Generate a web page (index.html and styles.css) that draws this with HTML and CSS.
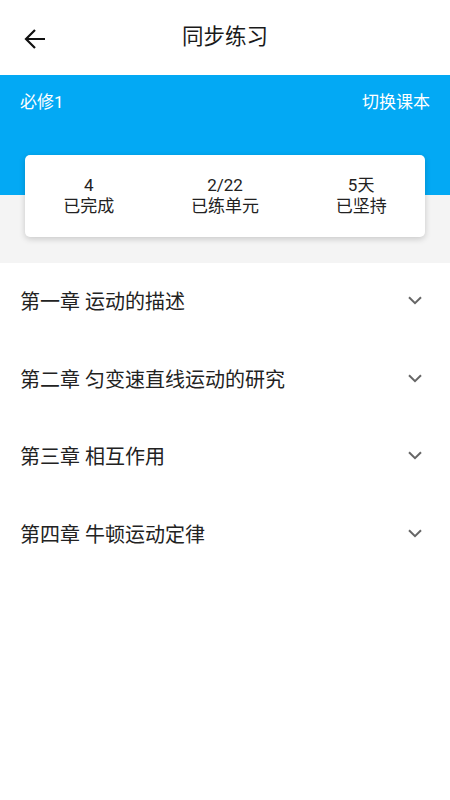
FILE: index.html
```html
<!DOCTYPE html>
<html lang="zh-CN">
<head>
<meta charset="utf-8">
<title>同步练习</title>
<link rel="stylesheet" href="styles.css">
</head>
<body>
<header class="topbar">
  <svg class="back" width="22" height="22" viewBox="0 0 22 22" aria-hidden="true">
    <path d="M21 11H2.5M11 2L2 11l9 9" fill="none" stroke="#111" stroke-width="2.2" stroke-linecap="butt" stroke-linejoin="miter"/>
  </svg>
  <h1 class="title">同步练习</h1>
</header>
<section class="summary">
  <div class="book-row">
    <span>必修1</span>
    <span>切换课本</span>
  </div>
  <div class="card">
    <div class="stat"><div class="num">4</div><div class="label">已完成</div></div>
    <div class="stat"><div class="num">2/22</div><div class="label">已练单元</div></div>
    <div class="stat"><div class="num">5天</div><div class="label">已坚持</div></div>
  </div>
</section>
<ul class="chapters">
  <li class="chapter"><span>第一章 运动的描述</span><svg class="chev" width="14" height="9" viewBox="0 0 14 9"><path d="M1 1.2l6 6 6-6" fill="none" stroke="#666" stroke-width="2"/></svg></li>
  <li class="chapter"><span>第二章 匀变速直线运动的研究</span><svg class="chev" width="14" height="9" viewBox="0 0 14 9"><path d="M1 1.2l6 6 6-6" fill="none" stroke="#666" stroke-width="2"/></svg></li>
  <li class="chapter"><span>第三章 相互作用</span><svg class="chev" width="14" height="9" viewBox="0 0 14 9"><path d="M1 1.2l6 6 6-6" fill="none" stroke="#666" stroke-width="2"/></svg></li>
  <li class="chapter"><span>第四章 牛顿运动定律</span><svg class="chev" width="14" height="9" viewBox="0 0 14 9"><path d="M1 1.2l6 6 6-6" fill="none" stroke="#666" stroke-width="2"/></svg></li>
</ul>
</body>
</html>
```
FILE: styles.css
```css
* { box-sizing: border-box; }
html, body {
  margin: 0;
  padding: 0;
  background: #fff;
  font-family: Roboto, "Noto Sans CJK SC", sans-serif;
  font-weight: 400;
  color: #222;
}
.topbar {
  position: relative;
  height: 75px;
  display: flex;
  align-items: center;
  justify-content: center;
}
.back {
  position: absolute;
  left: 24px;
  top: 28px;
}
.title {
  margin: 0;
  font-size: 21.5px;
  font-weight: 400;
  color: #1a1a1a;
  line-height: 30px;
  padding-bottom: 1px;
}
.summary {
  background: linear-gradient(#03a9f4 0, #03a9f4 120px, #f4f4f4 120px);
  padding: 16px 0 26px;
}
.book-row {
  display: flex;
  justify-content: space-between;
  padding: 0 20px 0 20px;
  color: #fff;
  font-size: 17px;
  line-height: 22px;
}
.card {
  margin: 42px 25px 0;
  background: #fff;
  border-radius: 5px;
  box-shadow: 0 2px 6px rgba(0, 0, 0, 0.18);
  display: flex;
  justify-content: space-around;
  padding: 20px 0 20px;
}
.stat {
  text-align: center;
  font-size: 17px;
  line-height: 21px;
  color: #222;
}
.chapters {
  list-style: none;
  margin: 0;
  padding: 0;
}
.chapter {
  height: 77.6px;
  display: flex;
  align-items: center;
  justify-content: space-between;
  padding: 0 28px 2px 20px;
  font-size: 20px;
  color: #222;
}
.chev { display: block; }
```
